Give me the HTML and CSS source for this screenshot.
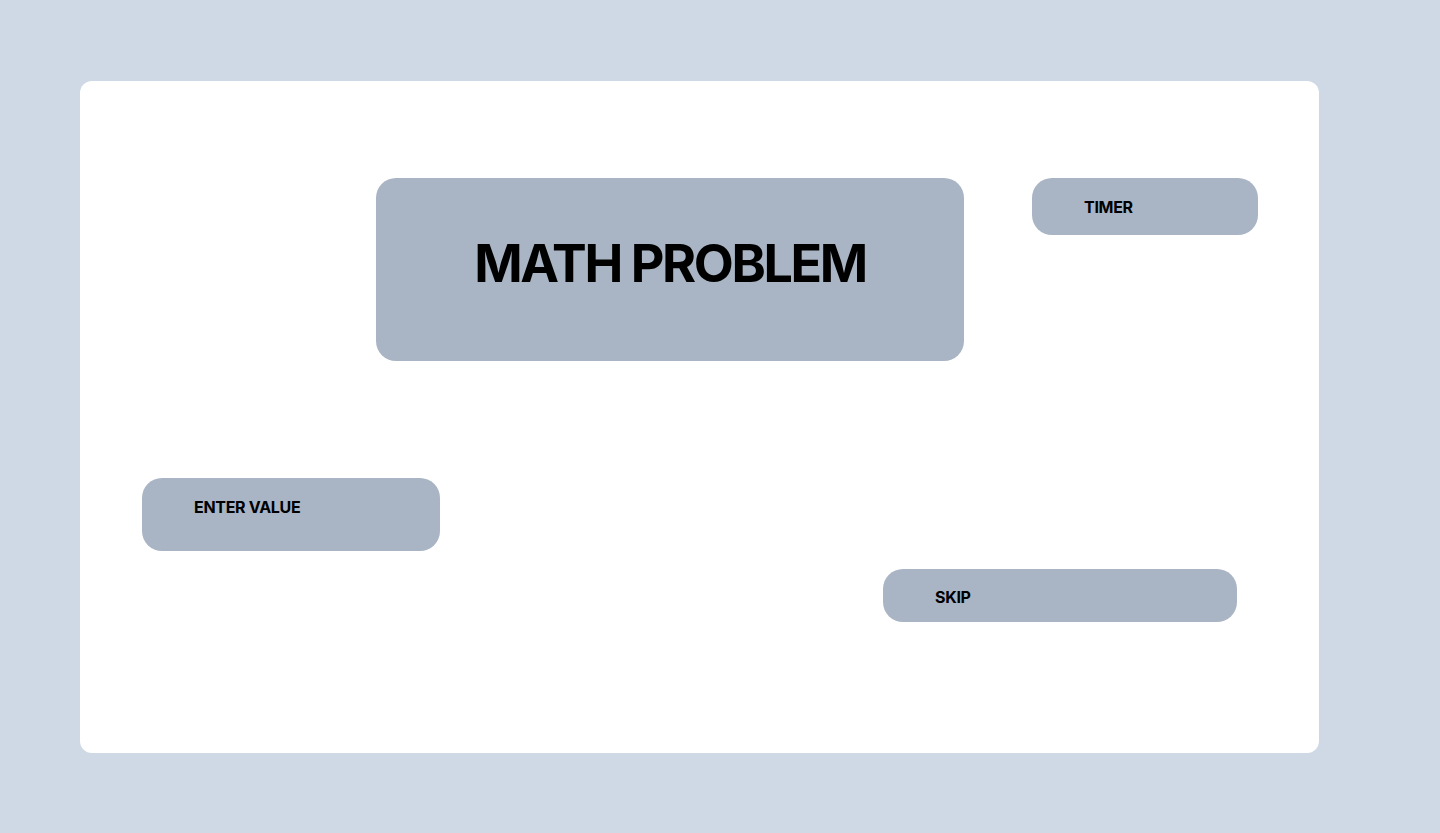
FILE: index.html
```html
<!DOCTYPE html>
<html lang="en">
<head>
<meta charset="utf-8">
<title>Math Problem</title>
<link rel="stylesheet" href="styles.css">
</head>
<body>
<main class="card">
  <div class="top-row">
    <div class="problem">MATH PROBLEM</div>
    <div class="pill timer">TIMER</div>
  </div>
  <div class="pill enter">ENTER VALUE</div>
  <div class="pill skip">SKIP</div>
</main>
</body>
</html>
```
FILE: styles.css
```css
html, body {
  margin: 0;
  padding: 0;
}
body {
  background: #cfd9e5;
  font-family: Inter, "Liberation Sans", sans-serif;
  color: #000;
  padding: 81px 0 0 80px;
  height: 833px;
  box-sizing: border-box;
}
.card {
  width: 1239px;
  height: 672px;
  background: #fff;
  border-radius: 12px;
  box-sizing: border-box;
  padding-top: 97px;
  display: flex;
  flex-direction: column;
  align-items: flex-start;
}
.top-row {
  display: flex;
  align-items: flex-start;
  gap: 68px;
  margin-left: 296px;
}
.problem {
  width: 588px;
  height: 183px;
  box-sizing: border-box;
  background: #a9b5c4;
  border-radius: 20px;
  padding-top: 59px;
  text-align: center;
  font-size: 52px;
  line-height: 53px;
  font-weight: 700;
  letter-spacing: -2.4px;
}
.pill {
  background: #a9b5c4;
  border-radius: 20px;
  box-sizing: border-box;
  padding: 20.5px 0 0 52px;
  font-size: 16px;
  line-height: 16px;
  font-weight: 700;
  letter-spacing: -0.3px;
}
.timer {
  width: 226px;
  height: 57px;
}
.enter {
  width: 298px;
  height: 73px;
  margin: 117px 0 0 62px;
}
.skip {
  width: 354px;
  height: 53px;
  margin: 18px 0 0 803px;
  padding-top: 20px;
}
```
